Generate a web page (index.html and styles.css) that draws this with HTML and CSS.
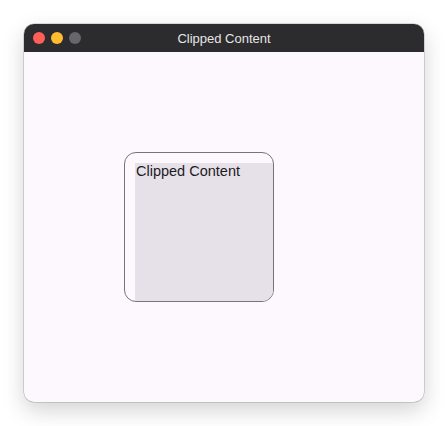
FILE: index.html
```html
<!DOCTYPE html>
<html>
<head>
<meta charset="utf-8">
<link rel="stylesheet" href="styles.css">
</head>
<body>
<div class="window">
  <div class="titlebar">
    <div class="lights">
      <span class="light red"></span>
      <span class="light yellow"></span>
      <span class="light gray"></span>
    </div>
    <div class="title">Clipped Content</div>
  </div>
  <div class="content">
    <div class="clip">
      <div class="inner">Clipped Content</div>
    </div>
  </div>
</div>
</body>
</html>
```
FILE: styles.css
```css
html, body {
  margin: 0;
  padding: 0;
  background: #ffffff;
}
body {
  padding: 24px;
  font-family: "Liberation Sans", Arial, sans-serif;
}
.window {
  width: 400px;
  height: 378px;
  border-radius: 10px;
  overflow: hidden;
  background: #fcf8fd;
  box-shadow: 0 0 0 0.5px rgba(0,0,0,0.25), 0 8px 22px rgba(0,0,0,0.18);
  display: flex;
  flex-direction: column;
}
.titlebar {
  height: 28px;
  background: #2c2b2e;
  position: relative;
  display: flex;
  align-items: center;
  justify-content: center;
  flex-shrink: 0;
}
.lights {
  position: absolute;
  left: 9px;
  top: 8px;
  display: flex;
  gap: 6px;
}
.light {
  width: 12px;
  height: 12px;
  border-radius: 50%;
  display: block;
}
.red { background: #fe5f57; }
.yellow { background: #febc2e; }
.gray { background: #67666b; }
.title {
  color: #e6e6e6;
  font-size: 13px;
  font-family: "Liberation Sans", Arial, sans-serif;
}
.content {
  flex: 1;
  padding: 100px;
}
.clip {
  width: 148px;
  height: 148px;
  border: 1px solid #78737c;
  border-radius: 12px;
  overflow: hidden;
}
.inner {
  margin-left: 10px;
  margin-top: 10px;
  width: 200px;
  height: 200px;
  background: #e6e1e8;
  color: #1c1b1f;
  font-size: 14.5px;
  line-height: 16px;
  padding-left: 1px;
}
```
